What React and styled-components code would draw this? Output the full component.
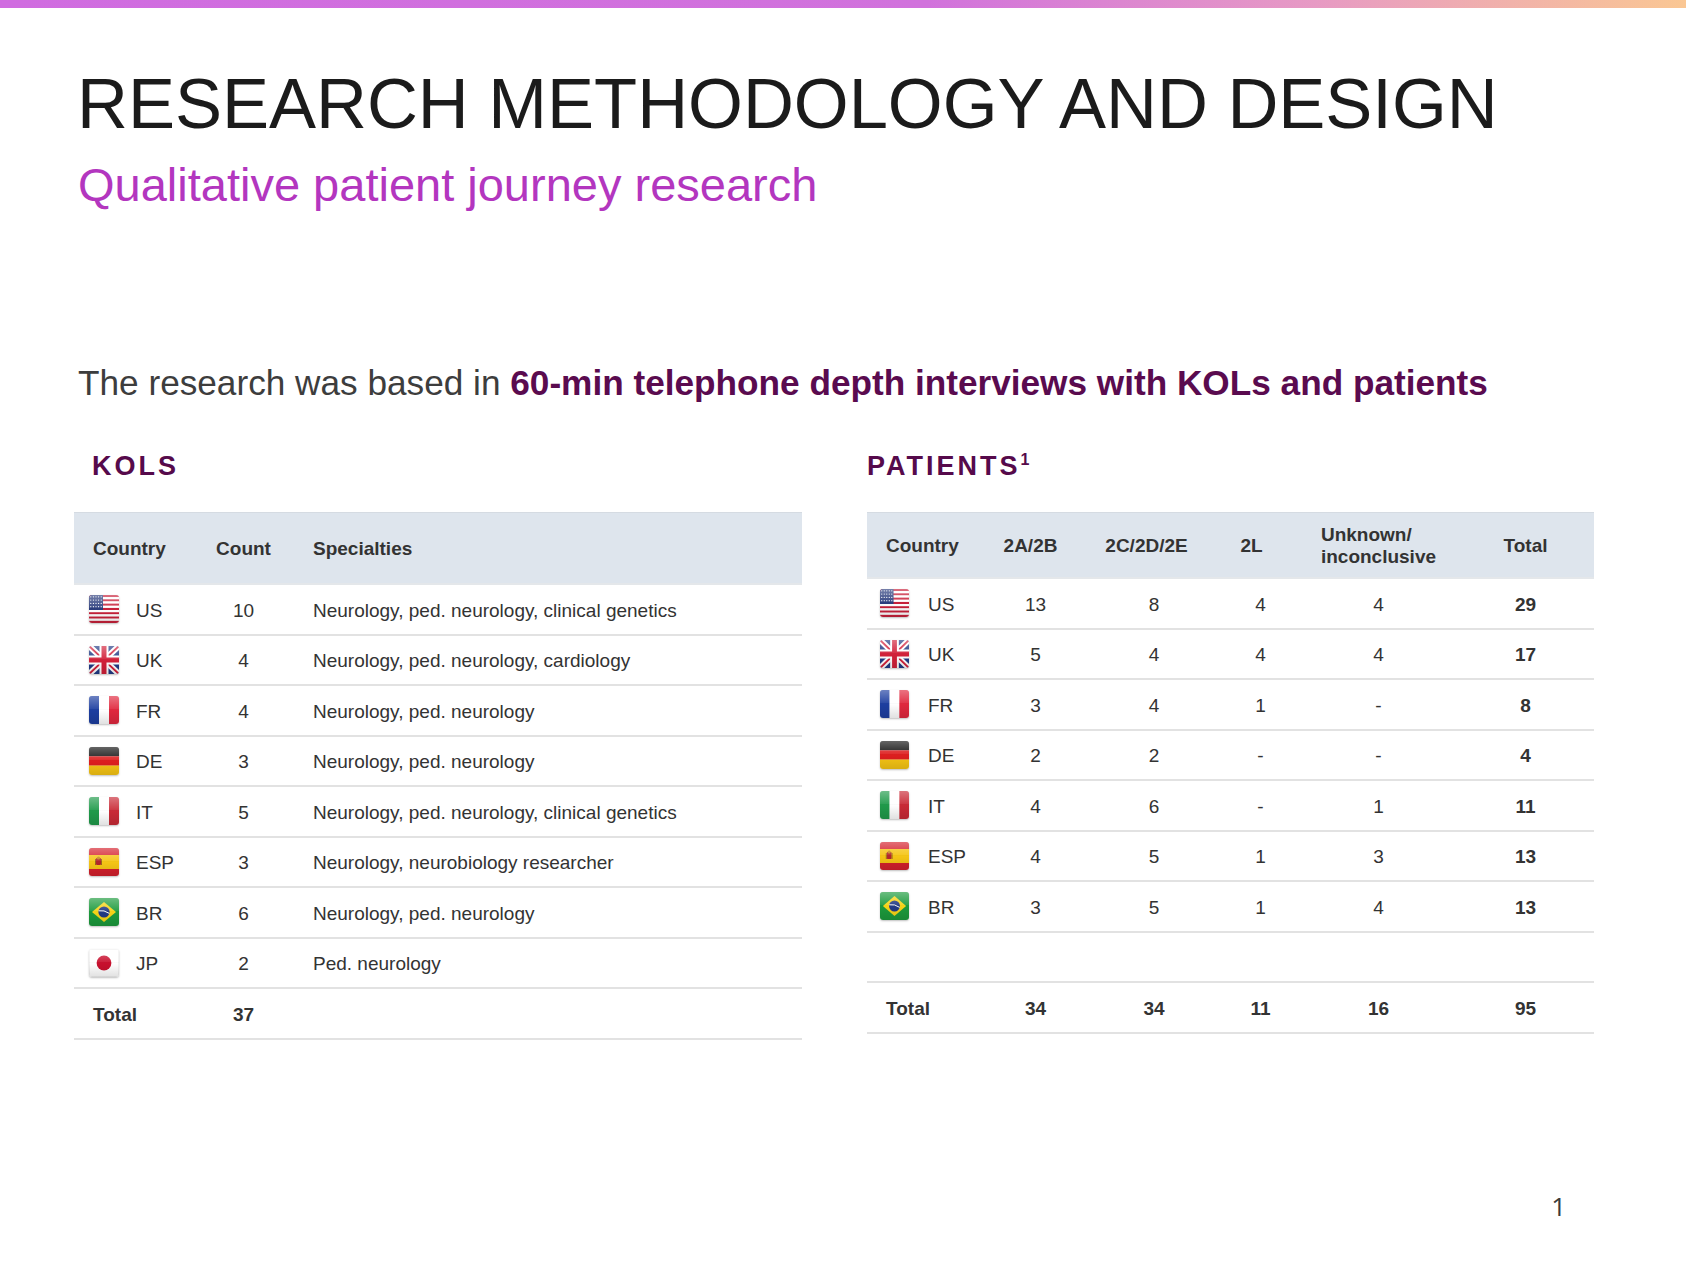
import React from 'react'
import styled, { createGlobalStyle } from 'styled-components'

const GlobalStyle = createGlobalStyle`
  html, body {
    margin: 0;
    padding: 0;
    background: #ffffff;
  }
  body {
    font-family: "Liberation Sans", Arial, sans-serif;
    color: #333333;
  }
`

const Slide = styled.div`
  display: flex;
  flex-direction: column;
  width: 1686px;
  height: 1269px;
  overflow: hidden;
  background: #ffffff;
`

const TopBar = styled.div`
  height: 8px;
  flex-shrink: 0;
  background: linear-gradient(90deg, #d06ce0 0%, #d172dc 55%, #e79ac4 78%, #fac793 100%);
`

const Content = styled.div`
  display: flex;
  flex-direction: column;
  flex-grow: 1;
  padding: 61px 0 0 77px;
`

const Title = styled.h1`
  margin: 0;
  font-size: 70.5px;
  line-height: 70px;
  font-weight: 400;
  color: #1b1b1b;
`

const Subtitle = styled.h2`
  margin: 23px 0 0 1px;
  font-size: 47px;
  line-height: 46px;
  font-weight: 400;
  color: #b336bf;
`

const Lead = styled.p`
  margin: 157px 0 0 1px;
  font-size: 35.2px;
  line-height: 35px;
  color: #3d3d3d;
  b {
    color: #5a0b4f;
    font-weight: 700;
  }
`

const Columns = styled.div`
  display: grid;
  grid-template-columns: 728px 727px;
  column-gap: 65px;
  margin: 53px 0 0 -3px;
`

const Section = styled.section`
  display: flex;
  flex-direction: column;
`

const SectionTitle = styled.h3`
  margin: 0 0 32px ${(p) => p.$indent || 0}px;
  font-size: 27px;
  line-height: 27px;
  font-weight: 700;
  letter-spacing: 3px;
  color: #560a4b;
  sup {
    font-size: 16px;
    letter-spacing: 0;
    vertical-align: 10px;
    line-height: 0;
  }
`

const Table = styled.div`
  display: flex;
  flex-direction: column;
  font-size: 19px;
  color: #333333;
`

const HeadRow = styled.div`
  display: grid;
  grid-template-columns: ${(p) => p.$cols};
  align-items: center;
  height: ${(p) => p.$height}px;
  padding-top: 2px;
  background: #dee5ed;
  border-top: 1px solid #d5dbe2;
  border-bottom: 2px solid #e4e7ea;
  box-sizing: border-box;
  font-weight: 700;
`

const Row = styled.div`
  display: grid;
  grid-template-columns: ${(p) => p.$cols};
  align-items: center;
  height: 50.5px;
  padding-top: 3px;
  border-bottom: 2px solid #e2e2e2;
  box-sizing: border-box;
  font-weight: ${(p) => (p.$bold ? 700 : 400)};
`

const Cell = styled.div`
  text-align: ${(p) => p.$align || 'center'};
  padding-left: ${(p) => p.$pad || 0}px;
  padding-right: ${(p) => p.$shift || 0}px;
  font-weight: ${(p) => (p.$bold ? 700 : 'inherit')};
  line-height: 22px;
`

const StackLabel = styled.span`
  display: inline-block;
  text-align: left;
`

const CountryCell = styled.div`
  display: flex;
  align-items: center;
  gap: ${(p) => p.$gap}px;
  padding-left: ${(p) => p.$pad}px;
  margin-top: -3px;
  span + & {
    margin: 0;
  }
`

const FlagBox = styled.span`
  display: block;
  width: ${(p) => p.$w}px;
  height: 28px;
  border-radius: 3px;
  overflow: hidden;
  box-shadow: 0 1px 2px rgba(0, 0, 0, 0.25);
  svg {
    display: block;
  }
`

const CodeLabel = styled.span`
  padding-top: 3px;
`

const Footer = styled.div`
  display: flex;
  justify-content: flex-end;
  margin-top: auto;
  padding: 0 120px 50px 0;
  font-family: "Open Sans", "Liberation Sans", sans-serif;
  font-size: 26px;
  line-height: 26px;
  color: #3a3a3a;
`

const Gloss = () => (
  <>
    <defs>
      <linearGradient id="gloss" x1="0" y1="0" x2="0" y2="1">
        <stop offset="0" stopColor="#fff" stopOpacity="0.35" />
        <stop offset="0.45" stopColor="#fff" stopOpacity="0.08" />
        <stop offset="0.5" stopColor="#000" stopOpacity="0" />
        <stop offset="1" stopColor="#000" stopOpacity="0.12" />
      </linearGradient>
    </defs>
    <rect width="30" height="28" fill="url(#gloss)" />
  </>
)

const flagArt = {
  US: (
    <>
      {Array.from({ length: 13 }).map((_, i) => (
        <rect key={i} y={(i * 28) / 13} width="30" height={28 / 13} fill={i % 2 ? '#ffffff' : '#c8213a'} />
      ))}
      <rect width="14" height="15" fill="#2b3d7d" />
      {Array.from({ length: 20 }).map((_, i) => (
        <circle key={i} cx={1.8 + (i % 5) * 2.6} cy={1.8 + Math.floor(i / 5) * 3.3} r="0.6" fill="#ffffff" />
      ))}
    </>
  ),
  UK: (
    <>
      <rect width="30" height="28" fill="#213a84" />
      <path d="M0 0 L30 28 M30 0 L0 28" stroke="#ffffff" strokeWidth="6" />
      <path d="M0 0 L30 28 M30 0 L0 28" stroke="#d2213a" strokeWidth="2" />
      <path d="M15 0 V28 M0 14 H30" stroke="#ffffff" strokeWidth="9" />
      <path d="M15 0 V28 M0 14 H30" stroke="#d2213a" strokeWidth="5" />
    </>
  ),
  FR: (
    <>
      <rect width="10" height="28" fill="#1d3ea0" />
      <rect x="10" width="10" height="28" fill="#ffffff" />
      <rect x="20" width="10" height="28" fill="#e0283e" />
    </>
  ),
  DE: (
    <>
      <rect width="30" height="9.4" fill="#111111" />
      <rect y="9.3" width="30" height="9.4" fill="#dd1f1f" />
      <rect y="18.6" width="30" height="9.4" fill="#f6c514" />
    </>
  ),
  IT: (
    <>
      <rect width="10" height="28" fill="#1f9a4a" />
      <rect x="10" width="10" height="28" fill="#ffffff" />
      <rect x="20" width="10" height="28" fill="#c92a36" />
    </>
  ),
  ESP: (
    <>
      <rect width="30" height="28" fill="#d4202c" />
      <rect y="7" width="30" height="14" fill="#f5c515" />
      <rect x="7" y="10" width="5" height="7" rx="1" fill="#b3262c" />
      <circle cx="9.5" cy="10" r="1.6" fill="#c48a1a" />
      <rect x="6" y="11" width="1" height="6" fill="#9a6a1a" />
      <rect x="12" y="11" width="1" height="6" fill="#9a6a1a" />
    </>
  ),
  BR: (
    <>
      <rect width="30" height="28" fill="#1c9a3c" />
      <path d="M15 4 L27 14 L15 24 L3 14 Z" fill="#f6d417" />
      <circle cx="15" cy="14" r="5.6" fill="#213a84" />
      <path d="M9.6 12.8 Q15 11.8 20.4 15.4" stroke="#ffffff" strokeWidth="1" fill="none" />
    </>
  ),
  JP: (
    <>
      <rect width="30" height="28" fill="#ffffff" />
      <rect width="30" height="28" fill="none" stroke="#e2e2e2" strokeWidth="1" />
      <circle cx="15" cy="14" r="7.4" fill="#c8102e" />
    </>
  ),
}

const Flag = ({ code, width }) => (
  <FlagBox $w={width}>
    <svg width={width} height="28" viewBox="0 0 30 28" preserveAspectRatio="none">
      {flagArt[code]}
      <Gloss />
    </svg>
  </FlagBox>
)

const kolCols = '126px 87px 1fr'

const kols = [
  ['US', '10', 'Neurology, ped. neurology, clinical genetics'],
  ['UK', '4', 'Neurology, ped. neurology, cardiology'],
  ['FR', '4', 'Neurology, ped. neurology'],
  ['DE', '3', 'Neurology, ped. neurology'],
  ['IT', '5', 'Neurology, ped. neurology, clinical genetics'],
  ['ESP', '3', 'Neurology, neurobiology researcher'],
  ['BR', '6', 'Neurology, ped. neurology'],
  ['JP', '2', 'Ped. neurology'],
]

const patCols = '108px 121px 116px 97px 139px 1fr'

const patients = [
  ['US', '13', '8', '4', '4', '29'],
  ['UK', '5', '4', '4', '4', '17'],
  ['FR', '3', '4', '1', '-', '8'],
  ['DE', '2', '2', '-', '-', '4'],
  ['IT', '4', '6', '-', '1', '11'],
  ['ESP', '4', '5', '1', '3', '13'],
  ['BR', '3', '5', '1', '4', '13'],
]

const KolTable = () => (
  <Table>
    <HeadRow $cols={kolCols} $height={73}>
      <Cell $align="left" $pad={19}>Country</Cell>
      <Cell>Count</Cell>
      <Cell $align="left" $pad={26}>Specialties</Cell>
    </HeadRow>
    {kols.map(([code, count, spec]) => (
      <Row key={code} $cols={kolCols}>
        <CountryCell $pad={15} $gap={17}>
          <Flag code={code} width={30} />
          <CodeLabel>{code}</CodeLabel>
        </CountryCell>
        <Cell>{count}</Cell>
        <Cell $align="left" $pad={26}>{spec}</Cell>
      </Row>
    ))}
    <Row $cols={kolCols} $bold>
      <Cell $align="left" $pad={19}>Total</Cell>
      <Cell>37</Cell>
      <Cell />
    </Row>
  </Table>
)

const PatientTable = () => (
  <Table>
    <HeadRow $cols={patCols} $height={67}>
      <Cell $align="left" $pad={19}>Country</Cell>
      <Cell $shift={10}>2A/2B</Cell>
      <Cell $shift={15}>2C/2D/2E</Cell>
      <Cell $shift={18}>2L</Cell>
      <Cell>
        <StackLabel>
          Unknown/
          <br />
          inconclusive
        </StackLabel>
      </Cell>
      <Cell $pad={9}>Total</Cell>
    </HeadRow>
    {patients.map(([code, a, c, l, u, total]) => (
      <Row key={code} $cols={patCols}>
        <CountryCell $pad={13} $gap={19}>
          <Flag code={code} width={29} />
          <CodeLabel>{code}</CodeLabel>
        </CountryCell>
        <Cell>{a}</Cell>
        <Cell>{c}</Cell>
        <Cell>{l}</Cell>
        <Cell>{u}</Cell>
        <Cell $bold $pad={9}>{total}</Cell>
      </Row>
    ))}
    <Row $cols={patCols} />
    <Row $cols={patCols} $bold>
      <Cell $align="left" $pad={19}>Total</Cell>
      <Cell>34</Cell>
      <Cell>34</Cell>
      <Cell>11</Cell>
      <Cell>16</Cell>
      <Cell $pad={9}>95</Cell>
    </Row>
  </Table>
)

export default function App() {
  return (
    <Slide>
      <GlobalStyle />
      <TopBar />
      <Content>
        <Title>RESEARCH METHODOLOGY AND DESIGN</Title>
        <Subtitle>Qualitative patient journey research</Subtitle>
        <Lead>
          The research was based in <b>60-min telephone depth interviews with KOLs and patients</b>
        </Lead>
        <Columns>
          <Section>
            <SectionTitle $indent={18}>KOLS</SectionTitle>
            <KolTable />
          </Section>
          <Section>
            <SectionTitle>
              PATIENTS<sup>1</sup>
            </SectionTitle>
            <PatientTable />
          </Section>
        </Columns>
      </Content>
      <Footer>1</Footer>
    </Slide>
  )
}
